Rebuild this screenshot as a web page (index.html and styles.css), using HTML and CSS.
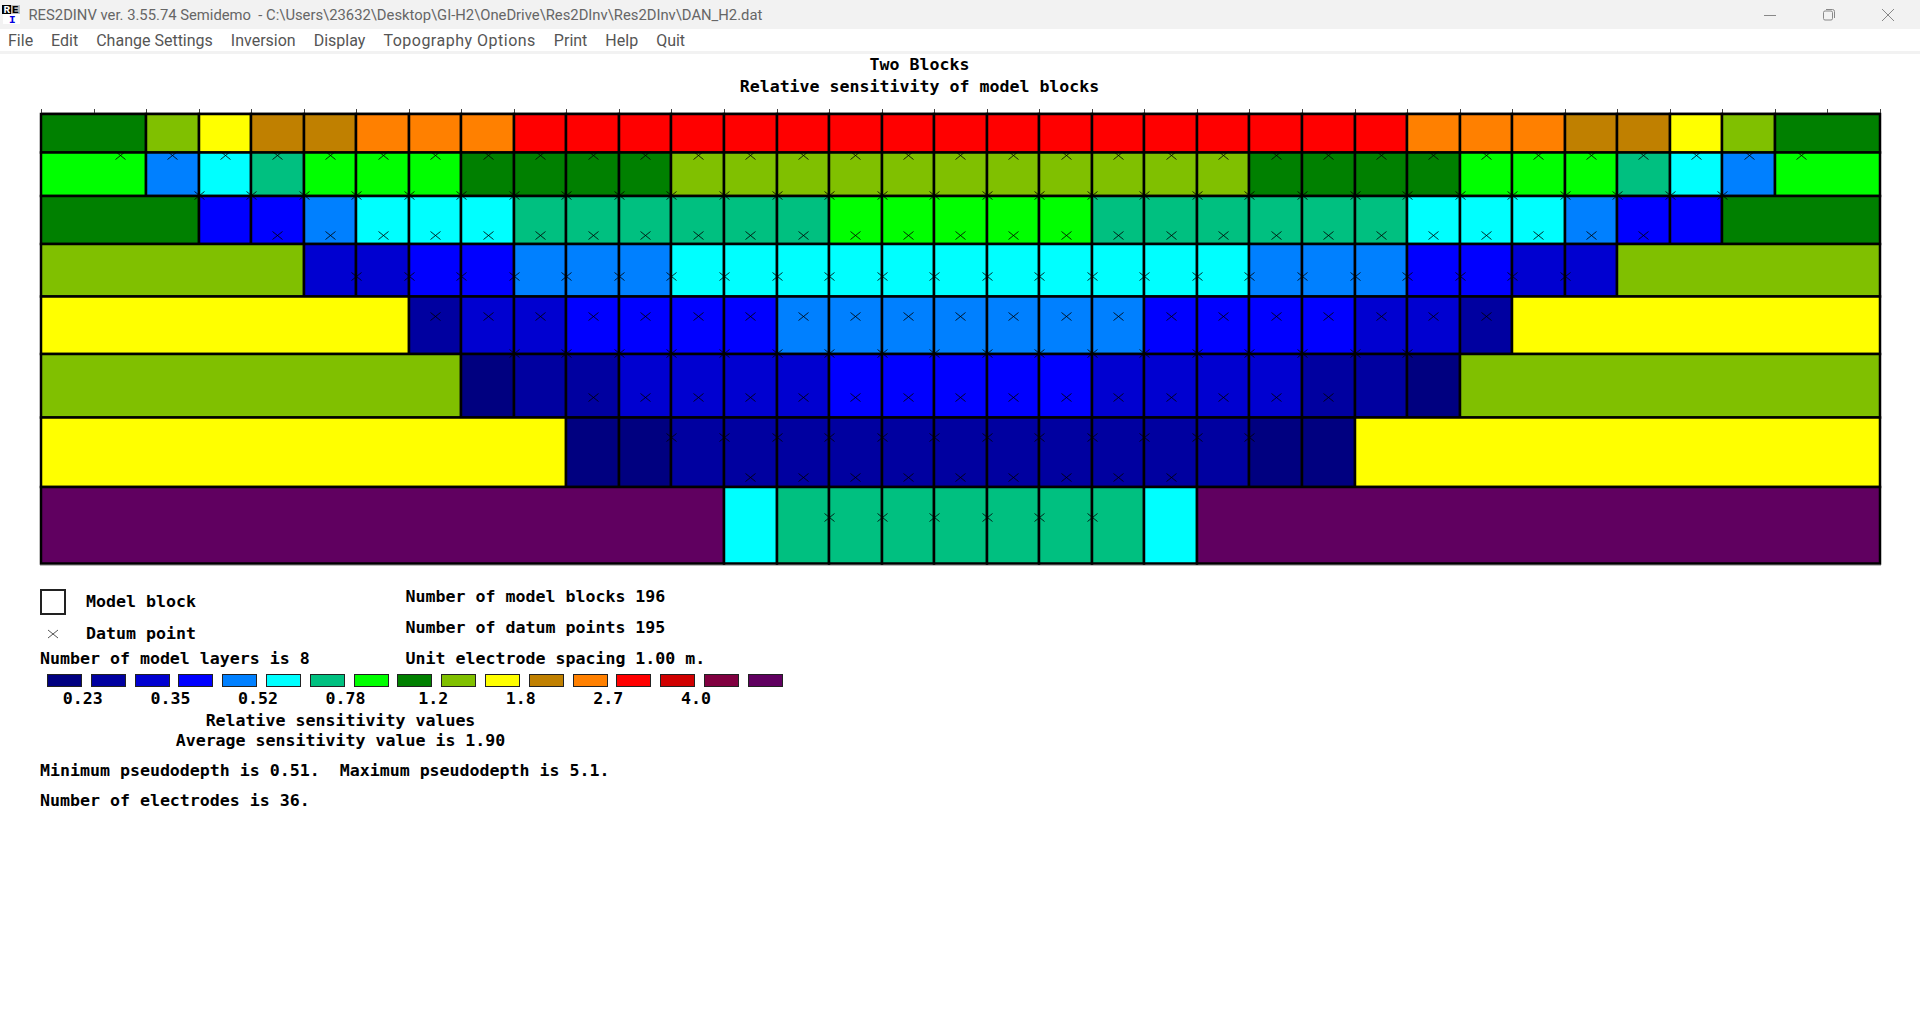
FILE: index.html
```html
<!DOCTYPE html>
<html lang="en">
<head>
    <meta charset="UTF-8">
    <meta name="viewport" content="width=device-width, initial-scale=1.0">
    <title>RES2DINV</title>
    <link rel="stylesheet" href="styles.css">
</head>
<body>
    <header class="titlebar">
        <svg class="app-icon" width="22" height="29" viewBox="0 0 22 29">
            <rect x="2" y="5" width="9" height="9" fill="#000"/>
            <rect x="11" y="5" width="9" height="9" fill="#bbb"/>
            <rect x="3" y="14" width="17" height="10" fill="#fff"/>
            <text x="3.5" y="13" class="icon-r">R</text>
            <text x="12" y="13" class="icon-e">E</text>
            <text x="9" y="23" class="icon-i">I</text>
        </svg>
        <span class="window-title">RES2DINV ver. 3.55.74 Semidemo  - C:\Users\23632\Desktop\GI-H2\OneDrive\Res2DInv\Res2DInv\DAN_H2.dat</span>
        <div class="window-buttons">
            <svg width="14" height="14" viewBox="0 0 14 14"><path d="M1 7.5h12" /></svg>
            <svg width="14" height="14" viewBox="0 0 14 14"><rect x="1.5" y="3" width="9" height="9" rx="1.5"/><path d="M4 1.5h6.5a2 2 0 0 1 2 2v6.5"/></svg>
            <svg width="14" height="14" viewBox="0 0 14 14"><path d="M1 1l12 12M13 1L1 13"/></svg>
        </div>
    </header>

    <nav class="menubar">
        <span>File</span>
        <span>Edit</span>
        <span>Change Settings</span>
        <span>Inversion</span>
        <span>Display</span>
        <span class="menu-wide">Topography Options</span>
        <span>Print</span>
        <span>Help</span>
        <span>Quit</span>
    </nav>

    <main class="mono">
        <div class="heading">
            <div>Two Blocks</div>
            <div>Relative sensitivity of model blocks</div>
        </div>

        <!-- viewBox in page coordinates, filled by chart.js -->
        <svg id="chart" class="chart" viewBox="0 96 1920 474"></svg>

        <section class="info">
            <div class="info-top">
                <div class="info-left">
                    <div class="key key-block"><span class="key-box"></span><span>Model block</span></div>
                    <div class="key key-datum">
                        <svg class="key-mark" width="26" height="12" viewBox="0 0 26 12"><path d="M8 2l10 8M18 2l-10 8"/></svg>
                        <span>Datum point</span>
                    </div>
                    <div class="layers">Number of model layers is 8</div>
                </div>
                <div class="info-right">
                    <div>Number of model blocks 196</div>
                    <div class="second">Number of datum points 195</div>
                    <div class="third">Unit electrode spacing 1.00 m.</div>
                </div>
            </div>

            <div class="swatches">
                <span class="c1"></span><span class="c2"></span><span class="c3"></span><span class="c4"></span>
                <span class="c5"></span><span class="c6"></span><span class="c7"></span><span class="c8"></span>
                <span class="c9"></span><span class="c10"></span><span class="c11"></span><span class="c12"></span>
                <span class="c13"></span><span class="c14"></span><span class="c15"></span><span class="c16"></span>
                <span class="c17"></span>
            </div>
            <div class="scale">
                <span>0.23</span><span>0.35</span><span>0.52</span><span>0.78</span>
                <span>1.2</span><span>1.8</span><span>2.7</span><span>4.0</span>
            </div>

            <div class="caption">
                <div>Relative sensitivity values</div>
                <div>Average sensitivity value is 1.90</div>
            </div>

            <div class="depth">Minimum pseudodepth is 0.51.  Maximum pseudodepth is 5.1.</div>
            <div class="electrodes">Number of electrodes is 36.</div>
        </section>
    </main>

    <script src="chart.js"></script>
</body>
</html>
```

FILE: styles.css
```css
html, body {
    margin: 0;
    background-color: #fff;
}

body {
    height: 1020px;
    overflow: hidden;
}

.titlebar {
    display: flex;
    align-items: center;
    height: 29px;
    background-color: #f2f2f2;
}

.app-icon {
    flex: none;
    overflow: visible;
}

.app-icon text {
    font-family: "Liberation Mono", monospace;
    font-weight: bold;
    font-size: 11px;
}

.icon-r { fill: #fff; }
.icon-e { fill: #000; }
.icon-i { fill: #0000e0; }

.window-title {
    margin-left: 6.5px;
    font-family: Roboto, sans-serif;
    font-size: 14.8px;
    color: #666;
    white-space: pre;
}

.window-buttons {
    display: flex;
    align-items: center;
    gap: 45px;
    margin-left: auto;
    margin-right: 25px;
}

.window-buttons svg {
    fill: none;
    stroke: #888;
    stroke-width: 1;
}

.menubar {
    display: flex;
    align-items: center;
    gap: 18px;
    height: 22px;
    padding-left: 8px;
    border-bottom: 3px solid #f2f2f2;
    font-family: Roboto, sans-serif;
    font-size: 16px;
    color: #555;
}

.menu-wide {
    letter-spacing: 0.5px;
}

.mono {
    display: block;
    font-family: "DejaVu Sans Mono", monospace;
    font-weight: bold;
    font-size: 16.6px;
    line-height: 20px;
    color: #000;
}

.heading {
    width: 1839px;
    height: 41px;
    padding-top: 1px;
    text-align: center;
}

.heading div + div {
    margin-top: 1.5px;
}

.chart {
    display: block;
    width: 1920px;
    height: 474px;
    filter: blur(0.3px);
}

.chart .cell {
    stroke: #000;
    stroke-width: 2.5;
}

.chart .tick {
    stroke: #444;
    stroke-width: 1;
}

.chart .frame {
    stroke: #bbb;
    stroke-width: 1;
}

.chart .datum {
    fill: none;
    stroke: #000;
    stroke-width: 1;
    stroke-opacity: 0.8;
}

.info {
    padding: 16.5px 0 0 40px;
}

.info-top {
    display: grid;
    grid-template-columns: 365.6px 1fr;
}

.key {
    display: flex;
    align-items: center;
    gap: 20px;
}

.key-block {
    margin-top: 2.5px;
    height: 26px;
}

.key-datum {
    margin-top: 9px;
    height: 20px;
}

.key-box {
    box-sizing: border-box;
    width: 26px;
    height: 26px;
    border: 2px solid #222;
}

.key-mark {
    fill: none;
    stroke: #555;
    stroke-width: 1;
}

.layers {
    margin-top: 4.7px;
}

.second {
    margin-top: 11.5px;
}

.third {
    margin-top: 10.7px;
}

.swatches {
    display: flex;
    gap: 8.8px;
    margin: 5px 0 0 7px;
}

.swatches span {
    box-sizing: border-box;
    width: 35px;
    height: 13px;
    border: 1px solid #222;
}

.scale {
    display: flex;
    margin: 2px 0 0 -1px;
}

.scale span {
    width: 87.6px;
    text-align: center;
}

.caption {
    width: 601px;
    margin-top: 2.3px;
    text-align: center;
}

.depth {
    margin-top: 10px;
    white-space: pre;
}

.electrodes {
    margin-top: 9.7px;
}

.c1 { background-color: #000080; fill: #000080; }
.c2 { background-color: #0000a0; fill: #0000a0; }
.c3 { background-color: #0000d0; fill: #0000d0; }
.c4 { background-color: #0000ff; fill: #0000ff; }
.c5 { background-color: #0080ff; fill: #0080ff; }
.c6 { background-color: #00ffff; fill: #00ffff; }
.c7 { background-color: #00c080; fill: #00c080; }
.c8 { background-color: #00ff00; fill: #00ff00; }
.c9 { background-color: #008000; fill: #008000; }
.c10 { background-color: #80c000; fill: #80c000; }
.c11 { background-color: #ffff00; fill: #ffff00; }
.c12 { background-color: #c08000; fill: #c08000; }
.c13 { background-color: #ff8000; fill: #ff8000; }
.c14 { background-color: #ff0000; fill: #ff0000; }
.c15 { background-color: #d00000; fill: #d00000; }
.c16 { background-color: #800040; fill: #800040; }
.c17 { background-color: #600060; fill: #600060; }
```

FILE: chart.js
```js
const SVG_NS = 'http://www.w3.org/2000/svg';
const chart = document.getElementById('chart');

const LEFT = 41;
const UNIT = 52.54;
const COLUMNS = 35;

// y of the lines between the layers
const LAYER_Y = [114, 152.5, 196, 244, 296.5, 354, 417.5, 487, 563.5];

// each layer: [colour index, width in units], left to right.
// The first and last block of a layer are one wide block, the rest one unit each.
const LAYERS = [
    [[9,2],[10,1],[11,1],[12,2],[13,3],[14,17],[13,3],[12,2],[11,1],[10,1],[9,2]],
    [[8,2],[5,1],[6,1],[7,1],[8,3],[9,4],[10,11],[9,4],[8,3],[7,1],[6,1],[5,1],[8,2]],
    [[9,3],[4,2],[5,1],[6,3],[7,6],[8,5],[7,6],[6,3],[5,1],[4,2],[9,3]],
    [[10,5],[3,2],[4,2],[5,3],[6,11],[5,3],[4,2],[3,2],[10,5]],
    [[11,7],[2,1],[3,2],[4,4],[5,7],[4,4],[3,2],[2,1],[11,7]],
    [[10,8],[1,1],[2,2],[3,4],[4,5],[3,4],[2,2],[1,1],[10,8]],
    [[11,10],[1,2],[2,11],[1,2],[11,10]],
    [[17,13],[6,1],[7,7],[6,1],[17,13]]
];

// datum rows: y, first and last position in units
const DATUMS = [
    [155, 1.5, 33.5], [195, 3, 32], [235, 4.5, 30.5], [276, 6, 29], [316, 7.5, 27.5],
    [353, 9, 26], [397, 10.5, 24.5], [437, 12, 23], [477, 13.5, 21.5], [517, 15, 20]
];

function colX(k) {
    return Math.round(LEFT + k * UNIT);
}

function add(tag, attrs) {
    const el = document.createElementNS(SVG_NS, tag);
    for (const name in attrs) {
        el.setAttribute(name, attrs[name]);
    }
    chart.appendChild(el);
}

// grey edge above and below the plot
add('line', { class: 'frame', x1: colX(0), x2: colX(COLUMNS), y1: 112.5, y2: 112.5 });
add('line', { class: 'frame', x1: colX(0) - 1, x2: colX(COLUMNS) + 1, y1: 565.5, y2: 565.5 });

// electrode ticks
for (let k = 0; k <= COLUMNS; k++) {
    add('line', { class: 'tick', x1: colX(k) + 0.5, x2: colX(k) + 0.5, y1: 109, y2: 114 });
}

function addBlock(colour, from, to, i) {
    add('rect', {
        class: 'cell c' + colour,
        x: colX(from),
        y: LAYER_Y[i],
        width: colX(to) - colX(from),
        height: LAYER_Y[i + 1] - LAYER_Y[i]
    });
}

LAYERS.forEach(function(layer, i) {
    let k = 0;
    layer.forEach(function(block, b) {
        if (b === 0 || b === layer.length - 1) {
            addBlock(block[0], k, k + block[1], i);
            k += block[1];
            return;
        }
        for (let n = 0; n < block[1]; n++) {
            addBlock(block[0], k, k + 1, i);
            k++;
        }
    });
});

DATUMS.forEach(function(row) {
    for (let k = row[1]; k <= row[2]; k++) {
        const x = Math.round(LEFT + k * UNIT) + 0.5;
        const y = row[0] + 0.5;
        add('path', {
            class: 'datum',
            d: `M${x - 5} ${y - 4}l10 8M${x + 5} ${y - 4}l-10 8`
        });
    }
});
```
